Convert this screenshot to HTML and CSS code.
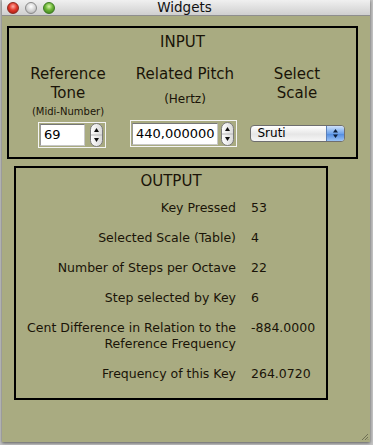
FILE: index.html
```html
<!DOCTYPE html>
<html>
<head>
    <title>Widgets</title>
    <meta charset="utf-8" />
    <link rel="stylesheet" href="styles.css">
</head>
<body>
    <div id="window">
        <div class="titlebar">
            <div class="lights">
                <span class="light red"></span>
                <span class="light grey"></span>
                <span class="light green"></span>
            </div>
            <div class="title">Widgets</div>
        </div>

        <div class="panel input-panel">
            <h2>INPUT</h2>
            <div class="cols">
                <div class="col col-tone">
                    <div class="heading">Reference<br>Tone</div>
                    <div class="hint">(Midi-Number)</div>
                    <div class="spin-frame short">
                        <div class="field">69</div>
                        <svg class="stepper" width="13" height="24" viewBox="0 0 13 24">
                            <defs>
                                <linearGradient id="sg1" x1="0" y1="0" x2="1" y2="0">
                                    <stop offset="0" stop-color="#ffffff"/>
                                    <stop offset="1" stop-color="#d8d8d8"/>
                                </linearGradient>
                            </defs>
                            <rect x="0.5" y="0.5" width="12" height="23" rx="6" fill="url(#sg1)" stroke="#7a7a7a"/>
                            <line x1="1" y1="12" x2="12" y2="12" stroke="#b8b8b8"/>
                            <path d="M6.5 5 L9 9 L4 9 Z" fill="#111"/>
                            <path d="M6.5 19 L9 15 L4 15 Z" fill="#111"/>
                        </svg>
                    </div>
                </div>
                <div class="col col-pitch">
                    <div class="heading">Related Pitch</div>
                    <div class="hint hertz">(Hertz)</div>
                    <div class="spin-frame long">
                        <div class="field">440,000000</div>
                        <svg class="stepper" width="13" height="24" viewBox="0 0 13 24">
                            <rect x="0.5" y="0.5" width="12" height="23" rx="6" fill="url(#sg1)" stroke="#7a7a7a"/>
                            <line x1="1" y1="12" x2="12" y2="12" stroke="#b8b8b8"/>
                            <path d="M6.5 5 L9 9 L4 9 Z" fill="#111"/>
                            <path d="M6.5 19 L9 15 L4 15 Z" fill="#111"/>
                        </svg>
                    </div>
                </div>
                <div class="col col-scale">
                    <div class="heading">Select<br>Scale</div>
                    <div class="popup">
                        <span class="popup-text">Sruti</span>
                        <span class="popup-arrows">
                            <svg width="7" height="11" viewBox="0 0 7 11">
                                <path d="M3.5 1 L6 4.5 L1 4.5 Z" fill="#0d1f3a"/>
                                <path d="M3.5 10 L6 6.5 L1 6.5 Z" fill="#0d1f3a"/>
                            </svg>
                        </span>
                    </div>
                </div>
            </div>
        </div>

        <div class="panel output-panel">
            <h2>OUTPUT</h2>
            <div class="rows">
                <div class="label">Key Pressed</div><div class="value">53</div>
                <div class="label">Selected Scale (Table)</div><div class="value">4</div>
                <div class="label">Number of Steps per Octave</div><div class="value">22</div>
                <div class="label">Step selected by Key</div><div class="value">6</div>
                <div class="label">Cent Difference in Relation to the<br>Reference Frequency</div><div class="value">-884.0000</div>
                <div class="label">Frequency of this Key</div><div class="value">264.0720</div>
            </div>
        </div>

        <svg class="grip" width="8" height="8" viewBox="0 0 8 8">
            <path d="M7 1 L1 7 M7 4 L4 7 M7 6.5 L6.5 7" stroke="#6f7055" stroke-width="1"/>
        </svg>
    </div>
</body>
</html>
```

FILE: styles.css
```css
html, body { margin:0; padding:0; }
body { background-color:#c4c4c4; font-family:"DejaVu Sans", sans-serif; color:#1a1408; width:373px; height:445px; overflow:hidden; }

#window { position:relative; margin-left:2px; width:368px; height:442px; background-color:#a9ab81; box-shadow:0 1px 3px rgba(0,0,0,.55); overflow:hidden; }

.titlebar { height:15px; border-bottom:1px solid #8e8e8e; background:linear-gradient(#f0f0f0, #cfcfcf); display:flex; align-items:center; color:#111; }
.lights { display:flex; gap:6px; padding-left:5px; width:60px; }
.light { width:12px; height:12px; border-radius:50%; box-sizing:border-box; }
.light.red { background:radial-gradient(circle at 50% 35%, #ffb0a8 0, #e23a2c 45%, #9c140c 100%); border:1px solid #8c2a20; }
.light.grey { background:radial-gradient(circle at 50% 35%, #ffffff 0, #d6d6d6 50%, #a8a8a8 100%); border:1px solid #8a8a8a; }
.light.green { background:radial-gradient(circle at 50% 35%, #d8f5a8 0, #6cb637 45%, #35761a 100%); border:1px solid #3e7a22; }
.title { flex:1; text-align:center; font-size:13.5px; line-height:15px; margin-right:64px; margin-left:-4px; }

.panel { border:2px solid #000; box-sizing:border-box; }
.panel h2 { margin:0; font-size:15px; font-weight:normal; line-height:18px; text-align:center; }

.input-panel { margin:10px 0 0 5px; width:351px; padding:5px 0 9px 0; }
.cols { display:grid; grid-template-columns:118px 116px 108px; margin-top:14px; }
.col { display:flex; flex-direction:column; align-items:center; }
.heading { font-size:15px; line-height:19px; text-align:center; }
.hint { font-size:10px; line-height:13px; margin-top:2px; }
.hint.hertz { font-size:12px; line-height:15px; margin-top:8px; }

.spin-frame { display:flex; align-items:center; justify-content:space-between; border:1px solid #f4f4f4; box-sizing:border-box; padding:0 1px 0 1px; }
.col-tone .spin-frame { margin-top:4px; margin-left:8px; width:68px; height:26px; }
.col-pitch .spin-frame { margin-top:13px; margin-left:-3px; width:107px; height:27px; }
.field { background:#fff; border:1px solid #8a8a8a; border-color:#777 #c8c8c8 #c8c8c8 #999; box-sizing:border-box; height:22px; font-size:13px; line-height:20px; padding-left:3px; color:#000; }
.col-tone .field { width:45px; }
.col-pitch .field { width:86px; }
.stepper { display:block; margin-right:1px; }

.popup { margin-top:22px; width:95px; height:17px; box-sizing:border-box; border:1px solid #6e6e6e; border-radius:4px; background:linear-gradient(#ffffff, #e6e6e6 55%, #f6f6f6); display:flex; overflow:hidden; color:#000; }
.popup-text { flex:1; font-size:12px; line-height:15px; padding-left:7px; }
.popup-arrows { width:17px; display:flex; align-items:center; justify-content:center; background:linear-gradient(#cfe2fb, #6ea3ea 50%, #4f8ae0 52%, #9cc4f5); border-left:1px solid #5b7fb8; }
.popup-arrows svg { display:block; }

.output-panel { margin:7px 0 0 12px; width:314px; padding:4px 0 16px 0; }
.rows { display:grid; grid-template-columns:220px auto; column-gap:15px; row-gap:14px; margin-top:10px; }
.label { font-size:12.5px; line-height:16px; text-align:right; white-space:nowrap; }
.value { font-size:12.5px; line-height:16px; }

.grip { position:absolute; right:1px; bottom:1px; }
```
